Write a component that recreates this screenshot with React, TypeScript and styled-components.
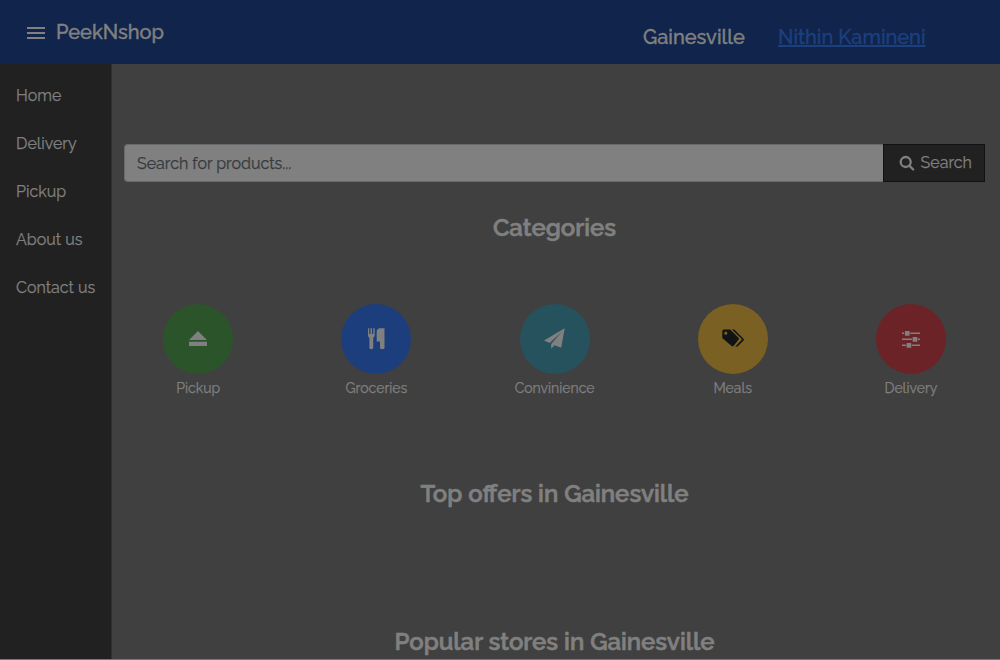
import React from "react";
import styled, { createGlobalStyle } from "styled-components";

const GlobalStyle = createGlobalStyle`
  * { box-sizing: border-box; }
  body { margin: 0; background: #404040; overflow: hidden; }
`;

const Page = styled.div`
  height: 660px;
  display: flex;
  flex-direction: column;
  background: #404040;
  border-bottom: 1px solid #787676;
  font-family: Raleway, Lato, "Liberation Sans", sans-serif;
  font-size: 16px;
  color: #808080;
  -webkit-text-stroke: 0.25px currentColor;
`;

const Header = styled.header`
  height: 64px;
  flex: none;
  display: flex;
  align-items: flex-start;
  padding-left: 27px;
  background: #10244c;
  font-size: 20px;
  font-weight: 500;
  line-height: 24px;
  white-space: nowrap;
  -webkit-text-stroke: 0.4px currentColor;
`;

const MenuIcon = styled.svg`
  display: block;
  width: 18px;
  height: 12px;
  margin: 27px 11px 0 0;
`;

const Brand = styled.div`
  width: 587px;
  padding-top: 20px;
`;

const City = styled.div`
  width: 135px;
  padding-top: 25px;
`;

const UserLink = styled.a`
  padding-top: 25px;
  color: #1c3f7d;
  text-decoration: underline;
  text-decoration-thickness: 2px;
`;

const Body = styled.div`
  flex: 1;
  min-height: 0;
  display: flex;
`;

const Sidebar = styled.nav`
  width: 112px;
  flex: none;
  padding-top: 8px;
  background: #212121;
  border-right: 1px solid #303030;
`;

const NavItem = styled.div`
  height: 48px;
  padding-left: 16px;
  line-height: 48px;
`;

const Main = styled.main`
  flex: 1;
  min-width: 0;
  padding-top: 80px;
  overflow: hidden;
`;

const SearchBar = styled.div`
  height: 38px;
  margin: 0 15px 0 12px;
  display: flex;
`;

const SearchField = styled.div`
  flex: 1;
  padding-left: 12px;
  line-height: 38px;
  color: #363a3e;
  background: #808080;
  border: 1px solid #676a6c;
  border-right: 0;
  border-radius: 4px 0 0 4px;
`;

const SearchButton = styled.div`
  width: 102px;
  display: flex;
  align-items: center;
  padding-left: 14.600px;
  line-height: 34px;
  background: #212121;
  border: 1px solid #111111;
`;

const SearchIcon = styled.svg`
  width: 16px;
  height: 16px;
  margin-right: 6px;
`;

const Heading = styled.h2<{ $top: number }>`
  margin: ${(p) => p.$top}px 3px 0 0;
  font-size: 24px;
  font-weight: 600;
  line-height: 30px;
  text-align: center;
  -webkit-text-stroke: 0.6px currentColor;
`;

const Categories = styled.div`
  height: 98px;
  margin: 61px 0 0 -2.8px;
  display: grid;
  grid-template-columns: repeat(5, 1fr);
`;

const Category = styled.div`
  display: flex;
  flex-direction: column;
  align-items: center;
  font-size: 14px;
  line-height: 20px;
`;

const Circle = styled.div<{ $bg: string; $fg: string }>`
  width: 70px;
  height: 70px;
  margin-bottom: 4px;
  display: flex;
  align-items: center;
  justify-content: center;
  border-radius: 50%;
  background: ${(p) => p.$bg};
  color: ${(p) => p.$fg};
`;

const Glyph = ({ children }: { children: React.ReactNode }) => (
  <svg width="24" height="24" viewBox="0 0 24 24" fill="currentColor">
    {children}
  </svg>
);

const icons = {
  eject: (
    <Glyph>
      <path d="M12 4 21 13H3ZM3 14.7h18V19H3Z" />
    </Glyph>
  ),
  cutlery: (
    <Glyph>
      <path d="M4 1.300h1.200V7h1.300V1.300h1.500V7h1.300V1.300h1.400V8c0 1.700-.9 2.300-1.500 2.800V21c0 1.500-3.800 1.500-3.800 0V10.800C4.700 10.300 4 9.700 4 8ZM12.700 5c0-2.200 1.300-3.700 3.300-3.700h4.500V21c0 1.500-4.500 1.500-4.500 0v-6.500h-3.300Z" />
    </Glyph>
  ),
  plane: (
    <Glyph>
      <path d="M21.700 1.200 1 13.500l5.700 2.500L19 4.500 8.200 17v4.800l3.400-3.500 6.600 2.400Z" />
    </Glyph>
  ),
  tags: (
    <Glyph>
      <path
        fillRule="evenodd"
        d="M1.300 3.700 2.500 2.500h6.700l8.300 8.300c.6.600.6 1.300 0 1.900l-5 6.300c-.6.600-1.300.600-1.900 0L1.300 11ZM4.800 4.600a1.600 1.600 0 1 0 0 3.200 1.600 1.600 0 0 0 0-3.200ZM11 2.500h2.300l9.200 9.300c.6.600.6 1.200 0 1.800l-5.900 5.900h-2.300l6.300-6.500c.4-.4.4-.8 0-1.200Z"
      />
    </Glyph>
  ),
  sliders: (
    <Glyph>
      <path d="M3 5.600h2.200v1.500H3ZM11.200 5.600H21v1.500h-9.800ZM6 4h4.600v4.700H6ZM3 11.600h9.900v1.500H3ZM19 11.600h2v1.500h-2ZM13.600 10h4.700v4.700h-4.700ZM3 17.600h4v1.500H3ZM12.800 17.600H21v1.500h-8.200ZM7.600 16h4.600v4.700H7.600Z" />
    </Glyph>
  ),
};

const navItems = ["Home", "Delivery", "Pickup", "About us", "Contact us"];

const categories = [
  { text: "Pickup", icon: icons.eject, bg: "#2b542b", fg: "#808080" },
  { text: "Groceries", icon: icons.cutlery, bg: "#1c3e7c", fg: "#808080" },
  { text: "Convinience", icon: icons.plane, bg: "#26525e", fg: "#808080" },
  { text: "Meals", icon: icons.tags, bg: "#7a6022", fg: "#111315" },
  { text: "Delivery", icon: icons.sliders, bg: "#6b2327", fg: "#808080" },
];

export default function App() {
  return (
    <>
      <GlobalStyle />
      <Page>
        <Header>
          <MenuIcon viewBox="0 0 18 12" fill="currentColor">
            <path d="M0 0h18v2H0ZM0 5h18v2H0ZM0 10h18v2H0Z" />
          </MenuIcon>
          <Brand>PeekNshop</Brand>
          <City>Gainesville</City>
          <UserLink>Nithin Kamineni</UserLink>
        </Header>
        <Body>
          <Sidebar>
            {navItems.map((item) => (
              <NavItem key={item}>{item}</NavItem>
            ))}
          </Sidebar>
          <Main>
            <SearchBar>
              <SearchField>Search for products...</SearchField>
              <SearchButton>
                <SearchIcon viewBox="0 0 16 16" fill="none" stroke="currentColor" strokeWidth="2.3">
                  <circle cx="6.700" cy="7" r="5" />
                  <path d="m10.300 10.600 3.900 3.900" strokeLinecap="round" />
                </SearchIcon>
                Search
              </SearchButton>
            </SearchBar>
            <Heading $top={31}>Categories</Heading>
            <Categories>
              {categories.map((c) => (
                <Category key={c.text}>
                  <Circle $bg={c.bg} $fg={c.fg}>{c.icon}</Circle>
                  {c.text}
                </Category>
              ))}
            </Categories>
            <Heading $top={77}>Top offers in Gainesville</Heading>
            <Heading $top={118}>Popular stores in Gainesville</Heading>
          </Main>
        </Body>
      </Page>
    </>
  );
}
